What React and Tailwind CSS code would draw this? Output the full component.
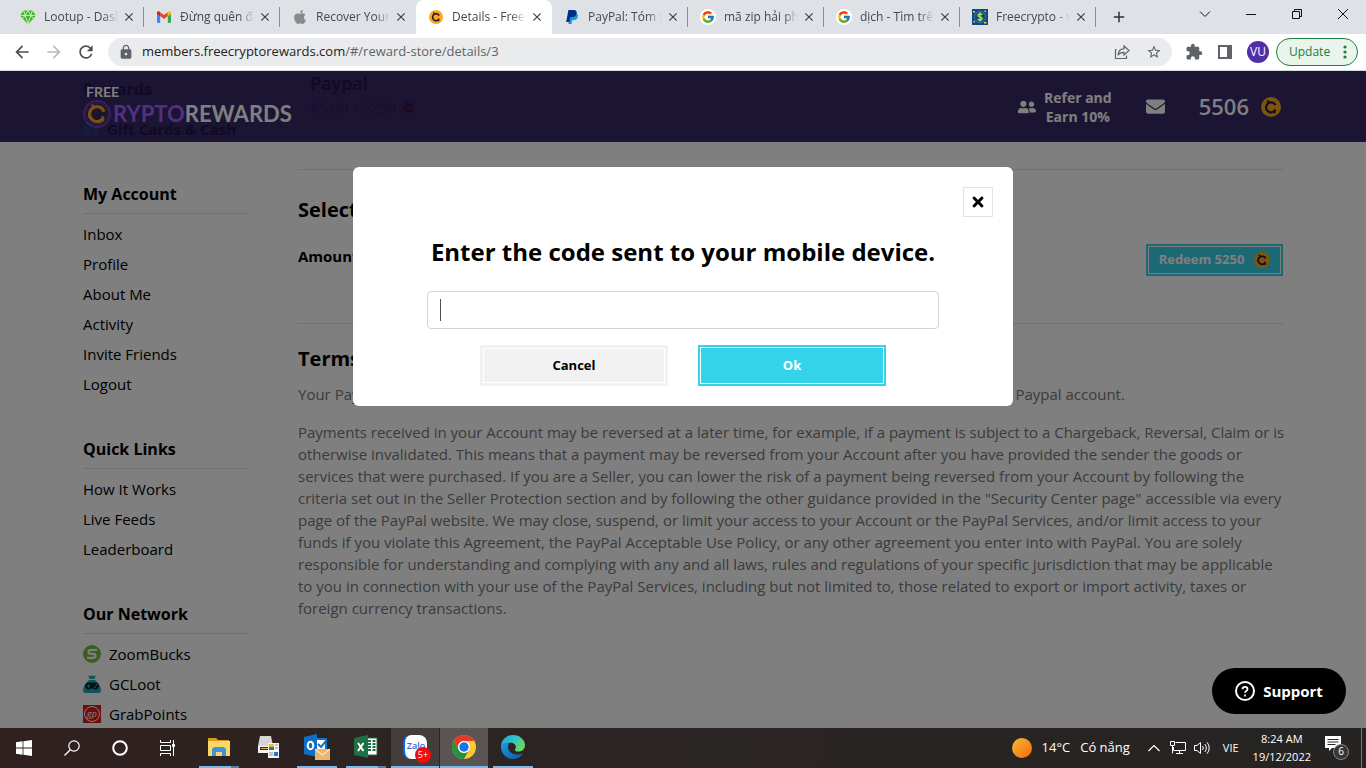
import React from "react";
import { FaApple, FaUserFriends, FaEnvelope, FaTimes, FaGift, FaGamepad } from "react-icons/fa";
import { MdArrowBack, MdArrowForward, MdRefresh, MdClose, MdAdd, MdLock, MdStarBorder, MdExtension } from "react-icons/md";
import { FcGoogle } from "react-icons/fc";

function Coin({ className, ring = "#fba91a", mark = "#241640" }) {
  return (
    <svg viewBox="0 0 20 20" className={className} aria-hidden="true">
      <circle cx="10" cy="10" r="10" fill={ring} />
      <path d="M14.500 8A5 5 0 1 0 14.200 13.200" fill="none" stroke={mark} strokeWidth="2.200" />
      <path d="M6.200 3.400l2 2.600M13.800 12.200v4" fill="none" stroke={mark} strokeWidth="1.800" />
    </svg>
  );
}

function Gem() {
  return (
    <svg viewBox="0 0 16 16" className="size-4" aria-hidden="true">
      <path d="M3.600 1.500h8.800L16 6.400 8 15.500 0 6.400z" fill="#3fb62c" />
      <path d="M0 6.400h16M3.600 1.500l1.600 4.900L8 1.500l2.800 4.900 1.600-4.900M5.200 6.400L8 15l2.800-8.600M2.600 9.600L5.200 6.400M13.400 9.600l-2.600-3.200" stroke="#d9f2d2" strokeWidth=".9" fill="none" />
    </svg>
  );
}

function Gmail() {
  return (
    <svg viewBox="0 0 16 16" className="size-4" aria-hidden="true">
      <path d="M1 4.200l3.200 2.400V14H2a1 1 0 0 1-1-1z" fill="#4285f4" />
      <path d="M15 4.200l-3.200 2.400V14H14a1 1 0 0 0 1-1z" fill="#34a853" />
      <path d="M4.200 3.200L8 6l3.800-2.800v3.900L8 10 4.200 7.100z" fill="#ea4335" />
      <path d="M1 5V3.800C1 2.300 2.700 1.800 3.600 2.700l.6.500v4z" fill="#c5221f" />
      <path d="M15 5V3.800c0-1.500-1.700-2-2.600-1.100l-.6.500v4z" fill="#fbbc04" />
    </svg>
  );
}

function Paypal() {
  return (
    <svg viewBox="0 0 16 16" className="size-4" aria-hidden="true">
      <path d="M5.500 4.300h6c2 .3 2.900 1.800 2.300 3.900-.6 2.100-2.200 3-4.400 3H8.200L7.500 15H4.400z" fill="#179bd7" />
      <path d="M4.400 1h5.200c2.300 0 3.500 1.200 3.100 3.300C12.200 6.900 10.500 8.300 8 8.300H6.200L5.300 13H2.200z" fill="#002f86" />
    </svg>
  );
}

function GoogleMark() {
  return (
    <span className="flex size-4 items-center justify-center rounded-full bg-white">
      <FcGoogle className="size-[14px]" />
    </span>
  );
}

function DollarMark() {
  return (
    <svg viewBox="0 0 16 16" className="size-4" aria-hidden="true">
      <rect width="16" height="16" fill="#12487f" />
      <circle cx="8" cy="8" r="5.600" fill="none" stroke="#27709d" strokeWidth="1.200" />
      <path d="M10.300 5.600C9.600 4.800 6 4.500 6 6.400c0 1.900 4.300 1.100 4.300 3.200 0 1.900-3.600 1.800-4.500.7M8.100 3.600v8.800" fill="none" stroke="#b4e04c" strokeWidth="1.400" />
      <path d="M1 2h2v1.500H1zM12.500 1.500h1.500V3h-1.500zM1.500 12H3v1.500H1.500zM12 13h2.500v1.500H12z" fill="#e3cf4e" />
    </svg>
  );
}

const tabs = [
  { title: "Lootup - Dash", icon: <Gem /> },
  { title: "Đừng quên đă", icon: <Gmail /> },
  { title: "Recover Your", icon: <FaApple className="size-4 text-[#8a8a8a]" />, noLine: true },
  { title: "Details - FreeC", icon: <Coin className="size-[14px]" />, active: true, noLine: true },
  { title: "PayPal: Tóm tắ", icon: <Paypal /> },
  { title: "mã zip hải ph", icon: <GoogleMark /> },
  { title: "dịch - Tìm trê", icon: <GoogleMark /> },
  { title: "Freecrypto - v", icon: <DollarMark /> },
];

function TabStrip() {
  return (
    <div className="flex h-[34px] shrink-0 bg-[#dee1e6] pl-2">
      {tabs.map((t) => (
        <div
          key={t.title}
          className={"flex w-[136px] min-w-0 items-center pl-3 " + (t.active ? "rounded-t-lg bg-white" : "")}
        >
          <span className="flex size-4 shrink-0 items-center justify-center">{t.icon}</span>
          <span className="ml-2 w-[74px] overflow-hidden whitespace-nowrap mask-r-from-80% mask-r-to-100% text-xs text-[#45494d]">
            {t.title}
          </span>
          <button aria-label={"Close " + t.title} className="ml-[3px] flex size-4 items-center justify-center text-[#3c4043]">
            <MdClose className="size-[14px]" />
          </button>
          <span className={"ml-auto h-5 w-px " + (t.noLine || t.active ? "" : "bg-[#8a8d91]")} />
        </div>
      ))}
      <button aria-label="New tab" className="ml-[11px] flex w-6 items-center justify-center text-[#303336]">
        <MdAdd className="size-[18px]" />
      </button>
      <div className="ml-auto flex h-7 items-center text-[#111]">
        <button aria-label="Search tabs" className="flex h-full w-[46px] items-center justify-center">
          <svg viewBox="0 0 12 12" className="size-3"><path d="M1 3.500l5 5 5-5" fill="none" stroke="currentColor" /></svg>
        </button>
        <button aria-label="Minimise" className="flex h-full w-[46px] items-center justify-center">
          <svg viewBox="0 0 10 10" className="size-[10px]"><path d="M0 5.500h10" stroke="currentColor" /></svg>
        </button>
        <button aria-label="Restore" className="flex h-full w-[46px] items-center justify-center">
          <svg viewBox="0 0 10 10" className="size-[10px]"><path d="M.5 2.500h7v7h-7zM2.500 2.500v-2h7v7h-2" fill="none" stroke="currentColor" /></svg>
        </button>
        <button aria-label="Close window" className="flex h-full w-[46px] items-center justify-center">
          <svg viewBox="0 0 10 10" className="size-[10px]"><path d="M0 0l10 10M10 0L0 10" stroke="currentColor" /></svg>
        </button>
      </div>
    </div>
  );
}

function Toolbar() {
  return (
    <div className="flex h-[37px] shrink-0 items-center border-b border-[#d3dbd8] bg-white pr-2 pl-3 text-[#5f6368]">
      <div className="flex gap-3">
        <button aria-label="Back"><MdArrowBack className="size-5 text-[#4b4f53]" /></button>
        <button aria-label="Forward"><MdArrowForward className="size-5 text-[#b9bbbe]" /></button>
        <button aria-label="Reload"><MdRefresh className="size-5 text-[#4b4f53]" /></button>
      </div>
      <div className="ml-3 flex h-7 flex-1 items-center rounded-full bg-[#e9ebed] px-2.5">
        <MdLock className="size-4" />
        <a href="#/reward-store/details/3" className="ml-2 flex-1 text-[13px] text-[#5f6368]">
          <span className="text-[#202124]">members.freecryptorewards.com</span>/#/reward-store/details/3
        </a>
        <button aria-label="Share" className="mr-4">
          <svg viewBox="0 0 16 16" className="size-4"><path d="M2.500 5.500H1.500v9h11v-3M10 2l5 4.500L10 11V8.300C7 8.300 5.200 9.300 4 11.300 4.300 7.500 6.500 5 10 4.700z" fill="none" stroke="currentColor" strokeWidth="1.200" /></svg>
        </button>
        <button aria-label="Bookmark"><MdStarBorder className="size-4" /></button>
      </div>
      <div className="ml-[13px] flex items-center gap-3">
        <button aria-label="Extensions"><MdExtension className="size-[18px]" /></button>
        <button aria-label="Side panel" className="flex size-5 items-center justify-center">
          <svg viewBox="0 0 14 14" className="size-[14px]"><path d="M1 1h12v12H1z" fill="none" stroke="currentColor" strokeWidth="2" /><path d="M9 1h4v12H9z" fill="currentColor" /></svg>
        </button>
        <button aria-label="Profile" className="flex size-[22px] items-center justify-center rounded-full bg-[#512da8] text-xs text-white">VU</button>
      </div>
      <button className="ml-[7px] flex h-7 w-[82px] items-center justify-between rounded-full border border-[#1e7e3c] bg-[#e9f4ec] pr-2.5 pl-3 text-xs text-[#188038]">
        Update
        <svg viewBox="0 0 4 14" className="h-[14px] w-1" fill="currentColor"><circle cx="2" cy="2" r="1.600" /><circle cx="2" cy="7" r="1.600" /><circle cx="2" cy="12" r="1.600" /></svg>
      </button>
    </div>
  );
}

function SiteHeader() {
  return (
    <header className="h-[71px] shrink-0 bg-[#372865]">
      <div className="relative mx-auto flex h-full max-w-[1200px] items-center">
        <div aria-hidden="true" className="absolute inset-0 overflow-hidden text-[#20124e]">
          <p className="absolute top-1.5 left-0 text-base font-bold">Rewards</p>
          <p className="absolute top-[47px] left-0 flex items-center gap-2 text-[15px] font-bold whitespace-nowrap">
            <FaGift className="size-4 text-[#283a78]" />Gift Cards &amp; Cash
          </p>
          <div className="absolute top-0 left-[227px]">
            <p className="text-lg leading-6 font-semibold">Paypal</p>
            <p className="flex items-center gap-1.5 text-[15px] leading-6 text-[#2c1e5a]">
              $5.00 / 5250 <Coin className="size-[13px]" ring="#3e2050" mark="#25124e" />
            </p>
          </div>
        </div>
        <a href="#/home" className="relative flex flex-col font-[Lato] font-bold text-white">
          <span className="mb-0.5 ml-[3px] text-sm leading-3">FREE</span>
          <span className="flex items-center text-[22px] leading-7">
            <svg viewBox="0 0 30 30" className="mr-[2px] size-7" aria-hidden="true">
              <circle cx="15" cy="15" r="14" fill="none" stroke="#8449cc" strokeWidth="1.400" />
              <circle cx="15" cy="15" r="12" fill="none" stroke="#6840aa" />
              <path d="M22.500 12.500A8 8 0 1 0 22 19" fill="none" stroke="#f9a51a" strokeWidth="3.400" />
              <path d="M9.500 5l3 3.500M21 17.500v4.500h-3v3" fill="none" stroke="#f9a51a" strokeWidth="2.400" />
            </svg>
            <span className="text-[#a461ff]">RYPTO</span>REWARDS
          </span>
        </a>
        <div className="relative ml-auto flex items-center pr-0.5 text-white">
          <a href="#/refer" className="flex items-center gap-2 text-center text-sm leading-[19px] font-bold">
            <FaUserFriends className="size-[18px]" />
            <span>Refer and<br />Earn 10%</span>
          </a>
          <a href="#/inbox" aria-label="Inbox" className="ml-[34px]"><FaEnvelope className="size-[19px]" /></a>
          <span className="ml-[34px] text-[22px] font-semibold">5506</span>
          <Coin className="ml-3 size-5" />
        </div>
      </div>
    </header>
  );
}

const network = {
  ZoomBucks: (
    <svg viewBox="0 0 18 18" className="size-[18px]"><circle cx="9" cy="9" r="9" fill="#76bc43" /><path d="M14 5H7.500a1.900 1.900 0 0 0 0 3.900h3a1.900 1.900 0 0 1 0 3.900H4" fill="none" stroke="#fff" strokeWidth="2.200" /></svg>
  ),
  GCLoot: (
    <span className="relative flex size-[18px] items-end justify-center">
      <svg viewBox="0 0 18 18" className="absolute inset-0 size-[18px]"><path d="M5 0l2 1.200L9 .3l2 .9L13 0l-1.500 4H6.500zM6 5h6c3.500 3 6 7 6 10.500 0 2-1 2.500-3 2.500H3c-2 0-3-.5-3-2.500C0 12 2.500 8 6 5z" fill="#1aaeb2" /></svg>
      <FaGamepad className="relative size-[14px] text-[#10202c]" />
    </span>
  ),
  GrabPoints: (
    <span className="flex size-[18px] items-center justify-center bg-[#e51b1b]">
      <span className="flex size-4 items-center justify-center rounded-full border border-white pb-0.5 text-[9px] leading-none text-white italic">gp</span>
    </span>
  ),
};

const sections = [
  { title: "My Account", items: ["Inbox", "Profile", "About Me", "Activity", "Invite Friends", "Logout"] },
  { title: "Quick Links", items: ["How It Works", "Live Feeds", "Leaderboard"] },
  { title: "Our Network", items: ["ZoomBucks", "GCLoot", "GrabPoints"] },
];

function Sidebar() {
  return (
    <nav className="flex w-[165px] shrink-0 flex-col gap-[38px] pt-10">
      {sections.map((s) => (
        <section key={s.title}>
          <h3 className="border-b border-[#dee2e6] pb-[7px] text-base leading-6 font-bold">{s.title}</h3>
          <ul className="pt-[5px]">
            {s.items.map((i) => (
              <li key={i} className="h-[30px]">
                <a href={"#/" + i} className="flex h-full items-center gap-2 text-[15px]">{network[i]}{i}</a>
              </li>
            ))}
          </ul>
        </section>
      ))}
    </nav>
  );
}

function Details() {
  return (
    <main className="min-w-0 flex-1 pt-[27px]">
      <section className="h-[154px] border-t border-[#dee2e6] pt-6">
        <h2 className="text-xl leading-8 font-bold">Select Amount</h2>
        <div className="mt-[18px] flex items-start justify-between">
          <span className="text-[15px] leading-6 font-bold">Amount</span>
          <button className="flex h-8 w-[137px] items-center justify-center gap-2.5 border-2 border-[#35d3ea] bg-[#35d3ea] text-[13px] font-bold text-white inset-ring inset-ring-white">
            Redeem 5250 <Coin className="size-4" />
          </button>
        </div>
      </section>
      <section className="border-t border-[#dee2e6] pt-[19px]">
        <h2 className="text-xl leading-8 font-bold">Terms</h2>
        <p className="mt-2 text-[15px] leading-[22px] text-[#777]">
          Your PayPal account will be credited with the amount chosen above. Please make sure that you have a Paypal account.
        </p>
        <p className="-mr-1.5 mt-4 text-[15px] leading-[22px] text-[#777]">
          Payments received in your Account may be reversed at a later time, for example, if a payment is subject to a Chargeback, Reversal, Claim or is otherwise invalidated. This means that a payment may be reversed from your Account after you have provided the sender the goods or services that were purchased. If you are a Seller, you can lower the risk of a payment being reversed from your Account by following the criteria set out in the Seller Protection section and by following the other guidance provided in the "Security Center page" accessible via every page of the PayPal website. We may close, suspend, or limit your access to your Account or the PayPal Services, and/or limit access to your funds if you violate this Agreement, the PayPal Acceptable Use Policy, or any other agreement you enter into with PayPal. You are solely responsible for understanding and complying with any and all laws, rules and regulations of your specific jurisdiction that may be applicable to you in connection with your use of the PayPal Services, including but not limited to, those related to export or import activity, taxes or foreign currency transactions.
        </p>
      </section>
    </main>
  );
}

function CodeDialog() {
  return (
    <div role="dialog" aria-labelledby="code-title" className="relative flex w-[660px] max-w-full flex-col items-center self-start rounded-md bg-white px-5 py-5 text-black">
      <button aria-label="Close" className="flex size-[30px] items-center justify-center self-end border border-[#e3e3e3]">
        <FaTimes className="size-4" />
      </button>
      <label id="code-title" htmlFor="code" className="mt-[19px] text-2xl leading-8 font-bold">
        Enter the code sent to your mobile device.
      </label>
      <div className="relative mt-[23px] flex w-full max-w-[512px]">
        <input id="code" type="text" className="h-[38px] w-full rounded border border-[#ced4da] px-3 text-base text-[#495057] caret-transparent outline-none" />
        <span aria-hidden="true" className="absolute top-2 left-[13px] h-[22px] w-px bg-[#495057]" />
      </div>
      <div className="mt-4 flex gap-[30px] text-[13px]">
        <button className="h-[41px] w-[188px] border-3 border-[#f1f1f1] bg-[#f1f1f1] font-bold inset-ring inset-ring-white">Cancel</button>
        <button className="h-[41px] w-[188px] border-2 border-[#35d3ea] bg-[#35d3ea] font-bold text-white inset-ring inset-ring-white">Ok</button>
      </div>
    </div>
  );
}

const apps = [
  {
    name: "File Explorer", bar: "split",
    icon: <svg viewBox="0 0 22 20" className="h-5 w-[22px]"><path d="M0 1h8l2 2h11v5H0z" fill="#d99a1c" /><path d="M0 4h22v15H0z" fill="#fbd669" /><path d="M4 19v-7l2-2h10l2 2v7h-4v-4H8v4z" fill="#3d94d6" /></svg>,
  },
  {
    name: "Fax and Scan", bar: "",
    icon: <svg viewBox="0 0 24 24" className="size-6"><path d="M4 1h11l2 10H2z" fill="#d6d6d6" /><path d="M2 11h15v7H2z" fill="#f3f3f3" /><path d="M4 12h12v3H4z" fill="#333" /><path d="M5 13h8v1H5z" fill="#e8a33b" /><path d="M12 8h11v15H12z" fill="#f4f6f8" /><path d="M13 9h5v6h-5z" fill="#3b7d3b" /><path d="M13 9h5v3h-5z" fill="#efb739" /><path d="M19 10h3M19 13h3M13 18h4M13 20h4" stroke="#8195a8" /><path d="M18 17h4v4h-4z" fill="#2a76c4" /></svg>,
  },
  {
    name: "Outlook", bar: "full",
    icon: <svg viewBox="0 0 26 26" className="size-[26px]"><path d="M12 5h10v12H12z" fill="#fff" stroke="#1173c7" strokeWidth="2" /><path d="M14 10l3 3 5-6" stroke="#1173c7" strokeWidth="2" fill="none" /><path d="M0 3l13-3v23L0 20z" fill="#0f6fc5" /><ellipse cx="6.500" cy="11.500" rx="2.800" ry="3.700" fill="none" stroke="#fff" strokeWidth="2" /><path d="M11 15h15v11H11z" fill="#eab472" /><path d="M11 15l7.500 6 7.500-6" fill="none" stroke="#fff" /></svg>,
  },
  {
    name: "Excel", bar: "split",
    icon: <svg viewBox="0 0 24 24" className="size-6"><path d="M12 3h11v17H12z" fill="#fff" stroke="#1e7145" /><path d="M14 6h3M14 9h3M14 12h3M14 15h3M18.500 6h3M18.500 9h3M18.500 12h3M18.500 15h3" stroke="#1e7145" strokeWidth="1.800" /><path d="M0 3l14-3v23L0 20z" fill="#1e7145" /><path d="M4 8l5.500 8M9.500 8L4 16" stroke="#fff" strokeWidth="2" /></svg>,
  },
  {
    name: "Zalo", bar: "wide",
    icon: (
      <span className="relative flex size-6 items-start justify-center rounded-lg border-l-2 border-[#0068ff] bg-white pt-1 text-[9px] font-semibold text-[#2a6de0]">
        Zalo
        <span className="absolute -right-1 -bottom-1 flex size-4 items-center justify-center rounded-full bg-[#f40b0b] text-[9px] font-normal text-white">5+</span>
      </span>
    ),
  },
  {
    name: "Chrome", bar: "active",
    icon: <svg viewBox="0 0 24 24" className="size-6"><circle cx="12" cy="12" r="12" fill="#fcc934" /><path d="M1.600 6A12 12 0 0 1 22.400 6H12a6 6 0 0 0-5.200 9z" fill="#e33b2e" /><path d="M1.600 6A12 12 0 0 0 12 24l5.200-9A6 6 0 0 1 6.800 15z" fill="#229342" /><circle cx="12" cy="12" r="6" fill="#fff" /><circle cx="12" cy="12" r="4.700" fill="#1a73e8" /></svg>,
  },
  {
    name: "Edge", bar: "full",
    icon: (
      <svg viewBox="0 0 24 24" className="size-6">
        <defs>
          <linearGradient id="edge-top" x1="0" y1="0" x2="1" y2="0.600"><stop offset="0" stopColor="#219fdc" /><stop offset="0.500" stopColor="#2fc3c8" /><stop offset="1" stopColor="#6ad85c" /></linearGradient>
          <linearGradient id="edge-low" x1="0" y1="0" x2="1" y2="1"><stop offset="0" stopColor="#1a9be0" /><stop offset="1" stopColor="#1255a8" /></linearGradient>
        </defs>
        <path d="M0 11C.6 4.500 5.500 0 12 0c7 0 12 5 12 10 0 4-2.800 6.500-6.200 6.500-3 0-4.300-1-3.600-2.200 1.800-3-.3-6.500-4.700-6.500C5 7.800 1.500 9 0 11z" fill="url(#edge-top)" />
        <path d="M0 11c1.500-3 5-3.900 8.500-3.200C6.500 10 6.500 14 8.800 16.600c3 3.400 8.700 4 13.400 1.400C20 21.700 16.500 24 12 24 5 24-.4 18 0 11z" fill="url(#edge-low)" />
      </svg>
    ),
  },
];

const barClass = {
  "": "w-10",
  full: "w-10 bg-[#76b9ed]",
  split: "w-10 border-r-8 border-[#4f83ab] bg-[#76b9ed]",
  wide: "w-12 bg-[#76b9ed]",
  active: "w-12 bg-[#76b9ed]",
};
const cellClass = { wide: "bg-[#433d3c]", active: "bg-[#5a5453]" };

function Taskbar() {
  return (
    <footer className="flex h-10 shrink-0 bg-linear-to-r from-[#30211f] via-[#2b2525] to-[#262323] text-white">
      <button aria-label="Start" className="flex w-12 items-center justify-center">
        <svg viewBox="0 0 16 16" className="size-4" fill="#fff"><path d="M0 2.200L6.600 1.300v6.300H0zM7.400 1.200L16 0v7.600H7.400zM0 8.400h6.600v6.300L0 13.800zM7.400 8.400H16V16l-8.600-1.200z" /></svg>
      </button>
      <button aria-label="Search" className="flex w-12 items-center justify-center">
        <svg viewBox="0 0 16 16" className="size-4"><circle cx="10" cy="6" r="5.200" fill="none" stroke="#fff" strokeWidth="1.200" /><path d="M6.300 9.700L.5 15.500" stroke="#fff" strokeWidth="1.300" /></svg>
      </button>
      <button aria-label="Cortana" className="flex w-12 items-center justify-center">
        <svg viewBox="0 0 16 16" className="size-4"><circle cx="8" cy="8" r="6.800" fill="none" stroke="#fff" strokeWidth="2" /></svg>
      </button>
      <button aria-label="Task view" className="mr-[3px] flex w-12 items-center justify-center">
        <svg viewBox="0 0 16 16" className="size-4" fill="none" stroke="#fff"><path d="M.5 0v2.500h10V0M.5 16v-2.500h10V16M.5 5.500h10v5H.5zM13.500 0v16" /><path d="M12.500 4.500h2v2h-2z" fill="#fff" /></svg>
      </button>
      <div className="flex gap-px">
        {apps.map((a) => (
          <button key={a.name} aria-label={a.name} className={"flex w-12 flex-col items-center " + (cellClass[a.bar] || "")}>
            <span className="flex flex-1 items-center">{a.icon}</span>
            <span className={"h-0.5 " + barClass[a.bar]} />
          </button>
        ))}
      </div>
      <div className="ml-auto flex items-center text-xs">
        <span className="size-5 rounded-full bg-linear-to-br from-[#f8b830] to-[#f06a0c]" />
        <span className="ml-2.5 text-[13px]">14°C</span>
        <span className="ml-2.5 text-[13px]">Có nắng</span>
        <svg viewBox="0 0 12 8" className="ml-[18px] h-2 w-3"><path d="M.5 7L6 1.500 11.500 7" fill="none" stroke="#fff" strokeWidth="1.200" /></svg>
        <svg viewBox="0 0 16 14" className="ml-2.5 h-[14px] w-4" fill="none" stroke="#fff"><path d="M5.500 1.500h10v8h-12V6M9.500 9.500v3M6 12.500h7M.5.500h4v4h-4zM2.500 4.500v8" /></svg>
        <svg viewBox="0 0 17 14" className="ml-2 h-[14px] w-[17px]" fill="none" stroke="#fff"><path d="M.5 4.500h2.500L6.500 1.500v11L3 9.500H.5zM8.500 5a3 3 0 0 1 0 4M10.800 3a6 6 0 0 1 0 8M13 1.300a8.500 8.500 0 0 1 0 11.400" /></svg>
        <span className="ml-3 text-[11px]">VIE</span>
        <span className="ml-[14px] flex flex-col items-center text-[11px] leading-[18px]">
          <span>8:24 AM</span>
          <span>19/12/2022</span>
        </span>
        <span className="relative mr-3 ml-[14px] flex size-6 items-start">
          <svg viewBox="0 0 16 15" className="h-[15px] w-4"><path d="M0 0h16v12H7l-3 3v-3H0z" fill="#fff" /><path d="M2.500 3.500h11M2.500 6h11M2.500 8.500h8" stroke="#2b2525" /></svg>
          <span className="absolute right-0 bottom-0 flex size-4 items-center justify-center rounded-full border border-[#8c8888] bg-[#3a3535] text-[10px]">6</span>
        </span>
        <span className="mr-1 h-10 w-px bg-[#777]" />
      </div>
    </footer>
  );
}

export default function App() {
  return (
    <div className="flex h-screen flex-col overflow-hidden bg-white font-['Open_Sans','Noto_Sans',sans-serif] text-black">
      <TabStrip />
      <Toolbar />
      <div className="relative flex min-h-0 flex-1 flex-col overflow-hidden">
        <SiteHeader />
        <div className="mx-auto flex min-h-0 w-full max-w-[1200px] flex-1 gap-[50px]">
          <Sidebar />
          <Details />
        </div>
        <div className="absolute inset-0 flex justify-center bg-black/50 pt-24">
          <CodeDialog />
        </div>
        <button className="absolute right-5 bottom-[14px] flex h-[46px] w-[134px] items-center justify-center gap-2 rounded-full bg-black text-[15px] font-bold text-white">
          <svg viewBox="0 0 20 20" className="size-5" fill="none" stroke="#fff" strokeWidth="2"><circle cx="10" cy="10" r="9" /><path d="M7.500 8.200c0-3.200 5-3.200 5 0 0 1.800-2.500 1.800-2.500 3.600M10 13.500v2" strokeWidth="1.800" /></svg>
          Support
        </button>
      </div>
      <Taskbar />
    </div>
  );
}
